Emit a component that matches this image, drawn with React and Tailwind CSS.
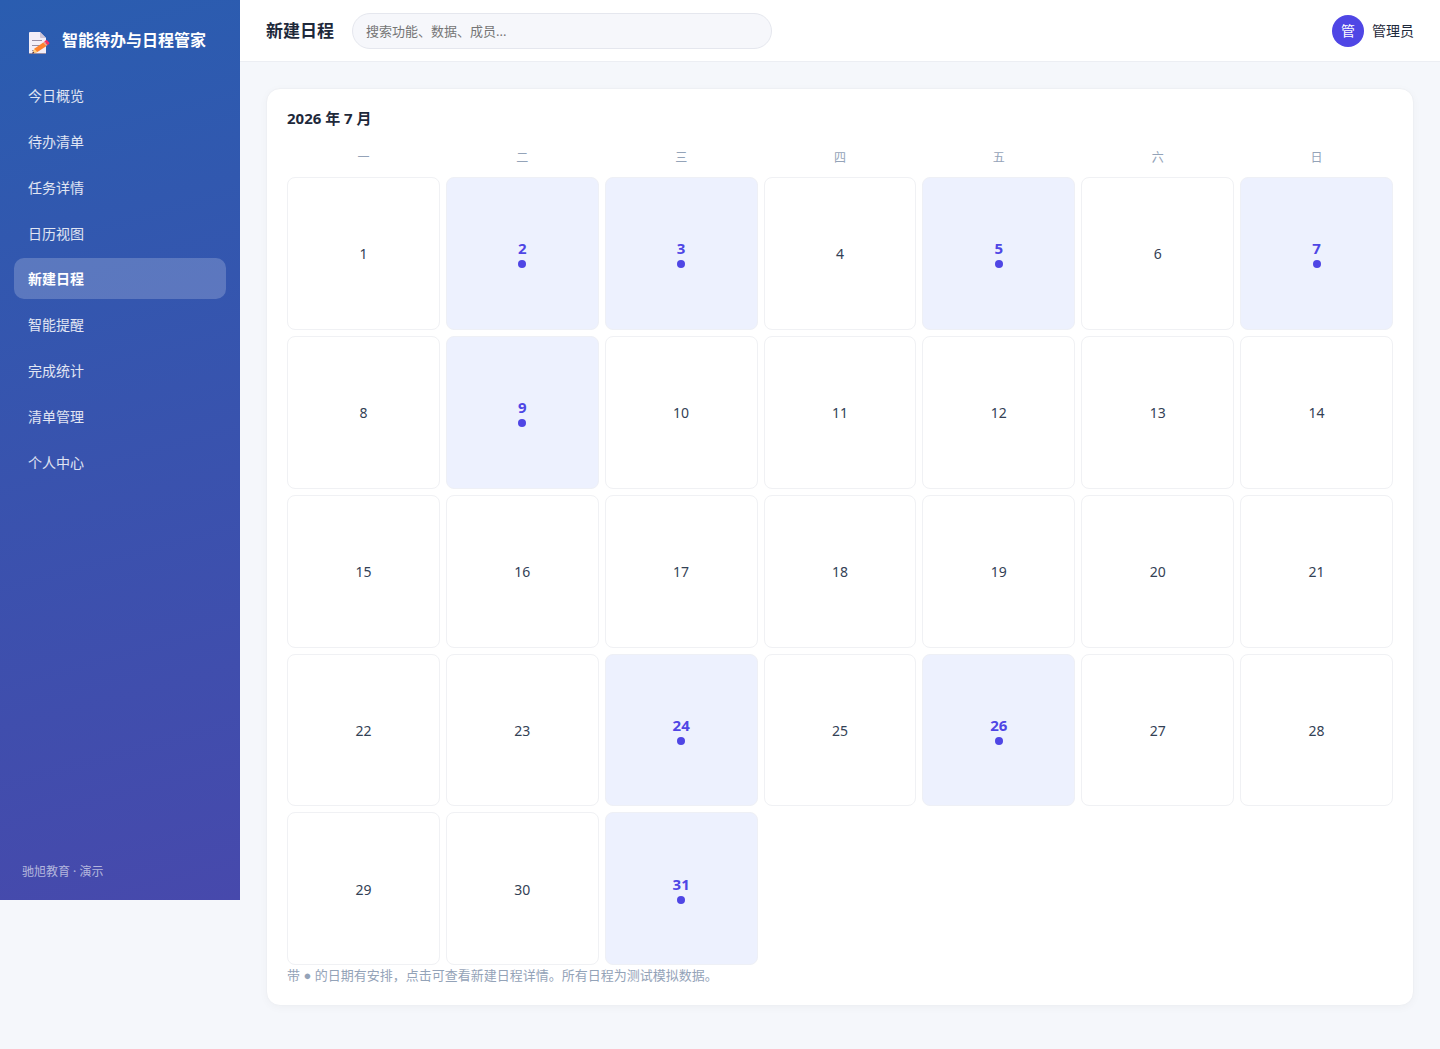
import React, { useState } from "react";

const navItems = [
  "今日概览",
  "待办清单",
  "任务详情",
  "日历视图",
  "新建日程",
  "智能提醒",
  "完成统计",
  "清单管理",
  "个人中心",
];

const weekdays = ["一", "二", "三", "四", "五", "六", "日"];
const days = Array.from({ length: 31 }, (_, i) => i + 1);
const busyDays = [2, 3, 5, 7, 9, 24, 26, 31];

const MemoIcon = () => (
  <svg viewBox="0 0 22 22" className="w-[22px] h-[22px] shrink-0" aria-hidden="true">
    <path d="M1 1q0-1 1-1h10l6 6v16H1z" fill="#f3eef8" />
    <path d="M12 0l6 6h-5q-1 0-1-1z" fill="#cdc4d6" />
    <path d="M1 21h17v1H1z" fill="#998ea4" />
    <path d="M4 8.5h10M4 13.5h8M4 18.5h3" stroke="#998ea4" strokeWidth="1" />
    <path d="M15.2 10.4l3.4 3.6-9.2 6-4.4 1.2 1.2-4.4z" fill="#ff822d" />
    <path d="M6.2 16.8l3.2 3.2-5 1.6z" fill="#ffce7c" />
    <path d="M4.9 19.6l1.5 1.5-2.2.7z" fill="#321b41" />
    <path d="M15.2 10.4l1.2-1 3.4 3.4-1.2 1.2z" fill="#e39d89" />
    <path d="M16.4 9.4l1.4-1.2q.6-.4 1.2.1l2.2 2.3q.5.6 0 1.2l-1.4 1.2z" fill="#f92f60" />
  </svg>
);

const Sidebar = ({ active, onSelect }) => (
  <aside className="w-60 h-[900px] shrink-0 flex flex-col px-3.5 pt-6 pb-5 text-white bg-[linear-gradient(165deg,#2a5db0,#4749ac)]">
    <div className="flex items-end gap-3 h-[30px] mb-5 px-3.5">
      <MemoIcon />
      <span className="text-base leading-7 font-bold whitespace-nowrap">智能待办与日程管家</span>
    </div>
    <nav className="flex flex-col gap-1">
      {navItems.map((item) => (
        <button
          key={item}
          onClick={() => onSelect(item)}
          className={
            item === active
              ? "h-[41px] px-3.5 rounded-[10px] text-left text-sm font-bold bg-white/20"
              : "h-[42px] px-3.5 pt-0.5 rounded-[10px] text-left text-sm text-white/85"
          }
        >
          {item}
        </button>
      ))}
    </nav>
    <p className="mt-auto px-2 text-xs leading-4 text-white/60">驰旭教育 · 演示</p>
  </aside>
);

const Header = ({ title }) => (
  <header className="flex items-center h-[62px] px-[26px] bg-white border-b border-[#eceef3]">
    <h1 className="text-[17px] font-bold mr-[18px]">{title}</h1>
    <input
      type="search"
      aria-label="搜索"
      placeholder="搜索功能、数据、成员..."
      className="w-[420px] h-9 px-[13px] rounded-full text-[13px] bg-[#f6f7fb] border border-[#e5e7ee] placeholder:text-[#757575] outline-none"
    />
    <div className="flex items-center gap-2 ml-auto text-sm">
      <span className="flex items-center justify-center w-8 h-8 rounded-full bg-[#4f46e5] text-white">
        管
      </span>
      管理员
    </div>
  </header>
);

const DayCell = ({ day, busy }) => {
  if (busy) {
    return (
      <button className="aspect-square flex flex-col items-center justify-center gap-0.5 rounded-lg border border-[#eef0f6] bg-[#edf1fe] text-[15px] leading-5 font-bold text-[#4f46e5]">
        <span>{day}</span>
        <span className="w-2 h-2 rounded-full bg-[#4f46e5]" />
      </button>
    );
  }
  return (
    <button className="aspect-square flex items-center justify-center pt-0.5 rounded-lg border border-[#f0f1f4] text-sm text-[#334155]">
      {day}
    </button>
  );
};

const App = () => {
  const [active, setActive] = useState("新建日程");

  return (
    <div className="flex items-start min-h-screen bg-[#f5f7fb] text-[#1e293b] font-['Noto_Sans','Noto_Sans_CJK_SC',sans-serif]">
      <Sidebar active={active} onSelect={setActive} />
      <div className="flex-1 min-w-0">
        <Header title={active} />
        <main className="p-[26px]">
          <section className="px-5 pt-5 pb-[19px] rounded-[14px] bg-white border border-[#eef0f4] shadow-[0_2px_8px_rgba(15,23,42,0.03)]">
            <h2 className="text-[15px] leading-[18px] font-bold">2026 年 7 月</h2>
            <div className="grid grid-cols-7 gap-1.5 mt-3.5">
              {weekdays.map((name) => (
                <div key={name} className="pt-2 pb-1 text-center text-xs leading-[18px] text-[#94a3b8]">
                  {name}
                </div>
              ))}
              {days.map((day) => (
                <DayCell key={day} day={day} busy={busyDays.includes(day)} />
              ))}
            </div>
            <p className="text-[13px] leading-5 text-[#94a3b8]">
              带 <span className="font-['Liberation_Sans',sans-serif]">●</span>{" "}
              的日期有安排，点击可查看新建日程详情。所有日程为测试模拟数据。
            </p>
          </section>
        </main>
      </div>
    </div>
  );
};

export default App;
